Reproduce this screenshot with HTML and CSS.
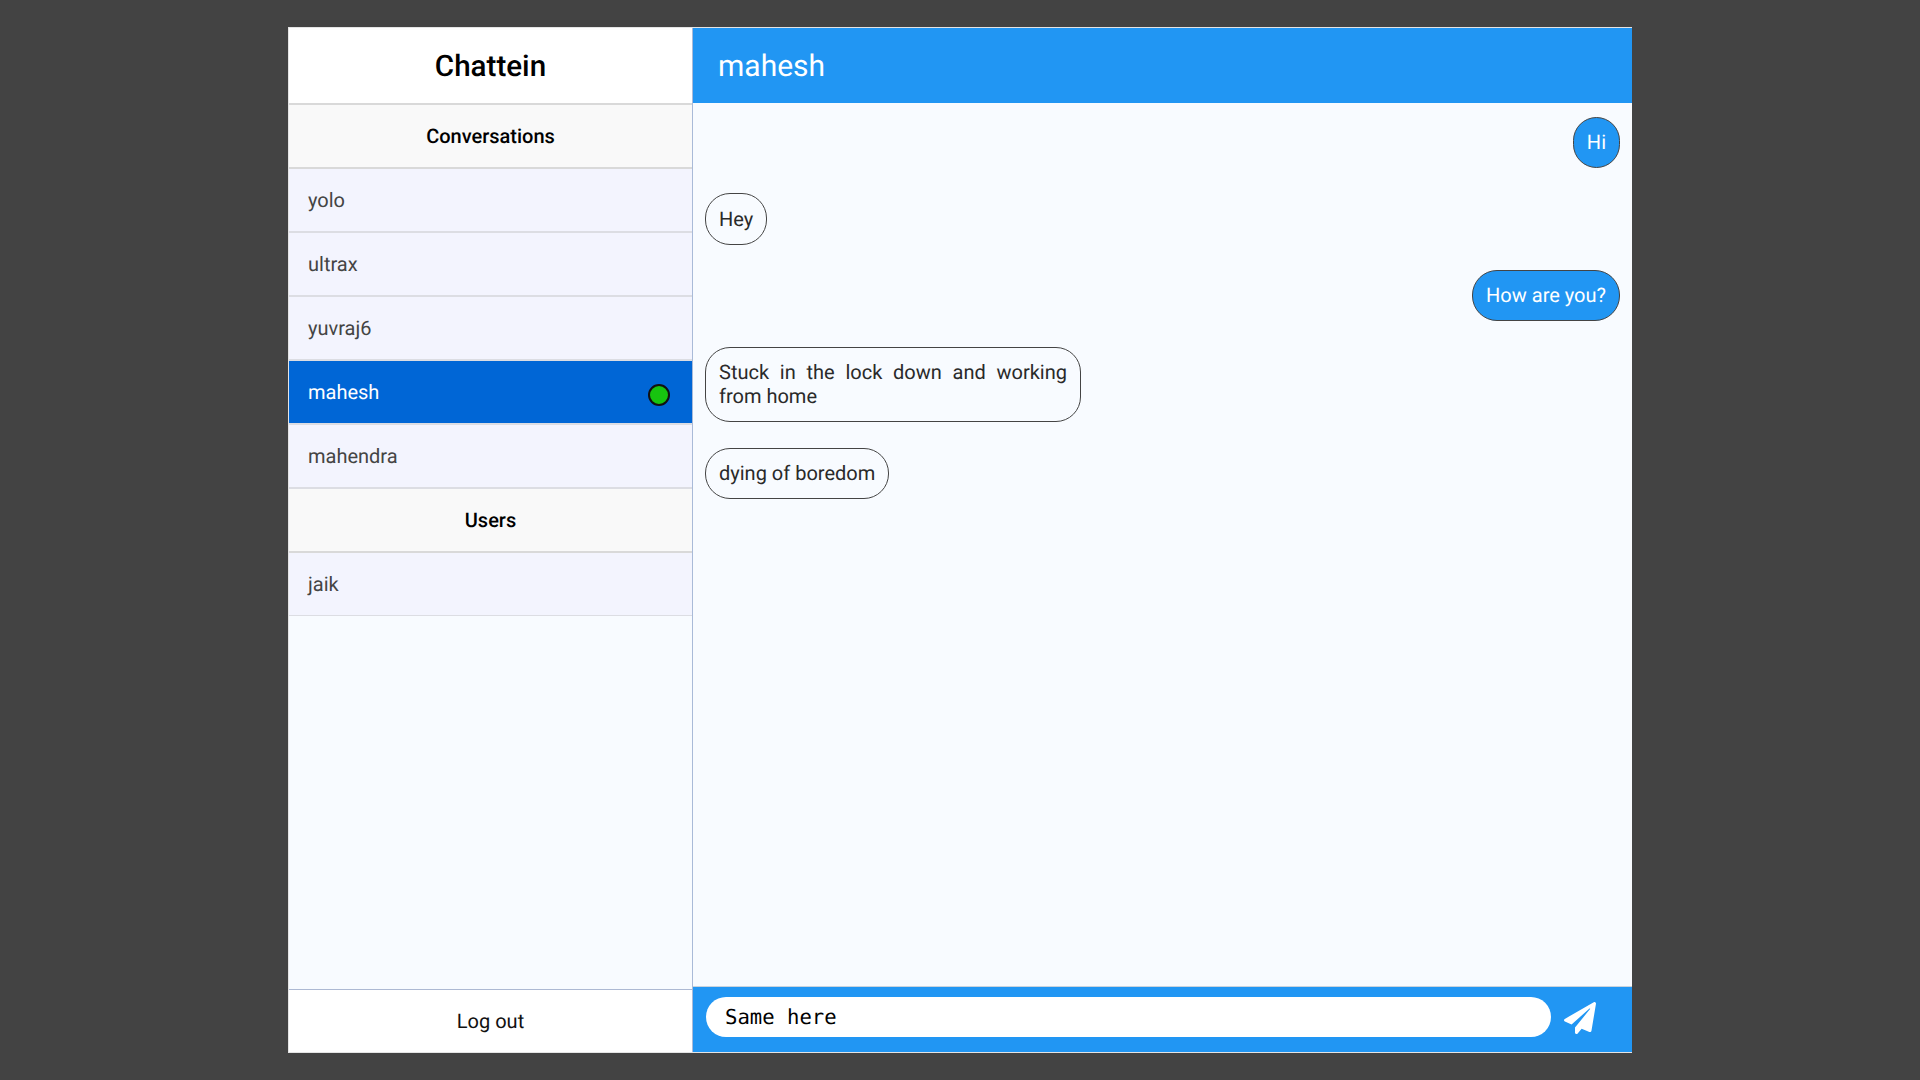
FILE: index.html
```html
<!DOCTYPE html>
<html lang="en">
<head>
<meta charset="utf-8">
<title>Chattein</title>
<link rel="stylesheet" href="styles.css">
</head>
<body>
<div class="app">
  <aside class="sidebar">
    <h1 class="brand">Chattein</h1>
    <h2 class="section">Conversations</h2>
    <div class="row">yolo</div>
    <div class="row">ultrax</div>
    <div class="row">yuvraj6</div>
    <div class="row active">mahesh<span class="dot"></span></div>
    <div class="row">mahendra</div>
    <h2 class="section">Users</h2>
    <div class="row last">jaik</div>
    <div class="logout">Log out</div>
  </aside>
  <main class="chat">
    <header class="chat-head">mahesh</header>
    <div class="messages">
      <div class="msg mine">Hi</div>
      <div class="msg">Hey</div>
      <div class="msg mine">How are you?</div>
      <div class="msg">Stuck in the lock down and working from home</div>
      <div class="msg">dying of boredom</div>
    </div>
    <form class="composer">
      <input class="field" type="text" value="Same here">
      <svg class="send" viewBox="0 0 512 512" aria-hidden="true"><path d="M476 3.2L12.5 270.6c-18.1 10.4-15.8 35.6 2.2 43.2L121 358.4l287.3-253.2c5.5-4.9 13.3 2.6 8.6 8.3L176 407v80.5c0 23.6 28.5 32.9 42.5 15.8L282 426l124.6 52.2c14.2 6 30.4-2.9 33-18.2l72-432C515 7.8 493.3-6.8 476 3.2z"/></svg>
    </form>
  </main>
</div>
</body>
</html>
```

FILE: styles.css
```css
* { box-sizing: border-box; }
html, body { margin: 0; height: 100%; }
body {
  background: #434343;
  font-family: Roboto, "Liberation Sans", sans-serif;
  text-rendering: geometricPrecision;
  overflow: hidden;
  padding-top: 27px;
}
.app {
  width: 1344px;
  height: 1026px;
  margin: 0 auto;
  display: flex;
  border: 1px solid #e4e4e4;
  border-right: 0;
  background: #f8fbff;
}
.sidebar {
  width: 404px;
  flex: none;
  display: flex;
  flex-direction: column;
  border-right: 1px solid #a9bad8;
}
.brand {
  margin: 0;
  height: 77px;
  flex: none;
  padding-top: 2px;
  background: #fff;
  border-bottom: 2px solid #d9d9d9;
  color: #000;
  font-size: 29.6px;
  font-weight: 500;
  display: flex;
  align-items: center;
  justify-content: center;
}
.section {
  margin: 0;
  height: 64px;
  flex: none;
  background: #f9f9f9;
  border-bottom: 2px solid #d9d9d9;
  color: #000;
  font-size: 20px;
  font-weight: 500;
  display: flex;
  align-items: center;
  justify-content: center;
}
.row {
  height: 64px;
  flex: none;
  padding: 0 20px 0 19px;
  background: #f3f4fe;
  border-bottom: 2px solid #dcdde3;
  color: #444;
  font-size: 20px;
  display: flex;
  align-items: center;
  justify-content: space-between;
}
.row.active {
  background: #0066d6;
  color: #fff;
}
.row.last {
  height: 63px;
  border-bottom-width: 1px;
}
.dot {
  width: 22px;
  height: 22px;
  margin: 6px 2px 0 0;
  border-radius: 50%;
  background: #17c40f;
  border: 2px solid #111;
}
.logout {
  margin-top: auto;
  height: 63px;
  flex: none;
  background: #fff;
  border-top: 1px solid #adb9d3;
  color: #111;
  font-size: 20px;
  display: flex;
  align-items: center;
  justify-content: center;
}
.chat {
  flex: 1;
  min-width: 0;
  display: flex;
  flex-direction: column;
}
.chat-head {
  height: 75px;
  flex: none;
  padding: 2px 25px 0;
  background: #2196f3;
  color: #fff;
  font-size: 30px;
  font-weight: 400;
  display: flex;
  align-items: center;
}
.messages {
  flex: 1;
  min-height: 0;
  padding: 13.7px 12px;
  display: flex;
  flex-direction: column;
  align-items: flex-start;
  gap: 25.7px;
}
.msg {
  max-width: 376px;
  padding: 12.2px 13px 12.9px;
  border: 1px solid #444;
  border-radius: 25px;
  color: #2a2a2a;
  font-size: 20px;
  text-align: justify;
}
.msg.mine {
  align-self: flex-end;
  background: #2196f3;
  color: #fff;
}
.composer {
  height: 66px;
  flex: none;
  padding: 10px 0 0 13px;
  background: #2196f3;
  border-top: 1px solid #c9d3dd;
  display: flex;
  align-items: flex-start;
  gap: 13px;
}
.field {
  width: 845px;
  height: 40px;
  padding: 0 19px;
  border: 0;
  border-radius: 20px;
  background: #fff;
  color: #000;
  font-family: "DejaVu Sans Mono", monospace;
  font-size: 20.6px;
  text-rendering: geometricPrecision;
  outline: none;
}
.send {
  width: 32px;
  height: 32px;
  margin-top: 5px;
  fill: #fff;
}
```
